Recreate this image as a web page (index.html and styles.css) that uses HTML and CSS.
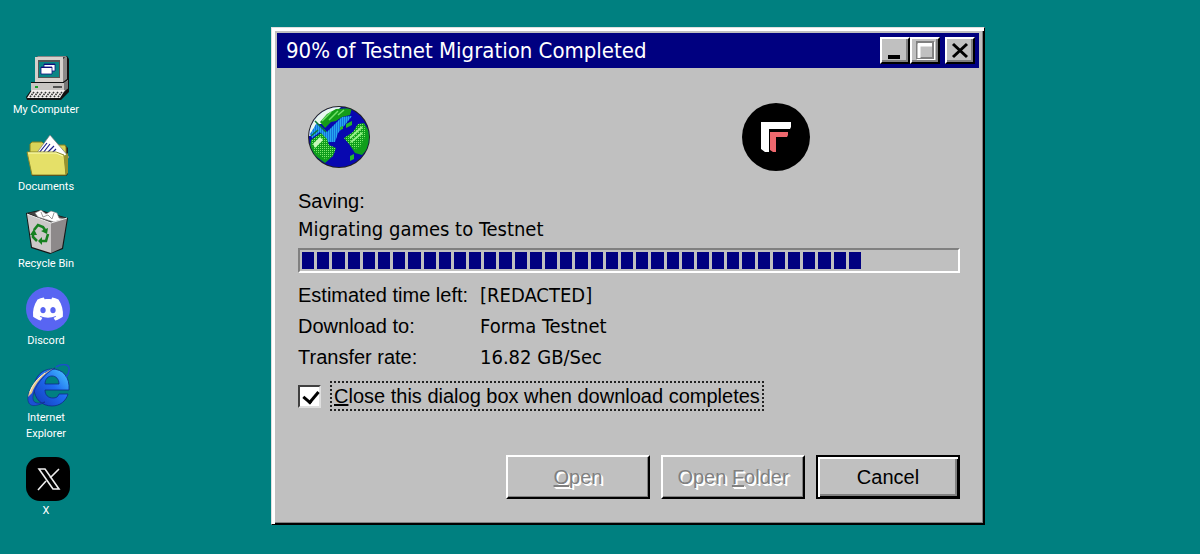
FILE: index.html
```
<!doctype html>
<html lang="en">
<head>
<meta charset="utf-8">
<title>90% of Testnet Migration Completed</title>
<link rel="stylesheet" href="styles.css">
</head>
<body>
<div class="desktop">

	<nav class="icons">
		<a href="#">
			<svg viewBox="0 0 44 44">
				<path d="M9 2L12 0H41L43 3V36L35 44H1L0 41L5 34V26H10Z" fill="#111"/>
				<path d="M9 2L12 0H41L37 3V25L41 22V1" fill="#8a8585"/>
				<path d="M9 1H37V26H9Z" fill="#d5d0cc"/>
				<path d="M37 3L41 1V23L37 26Z" fill="#8c8988"/>
				<path d="M12 4H34V22H12Z" fill="#555"/>
				<path d="M13 6H33V21H13Z" fill="#0a8585"/>
				<path d="M18 8H29V15H18Z" fill="#fff" stroke="#101080" stroke-width=".8"/>
				<path d="M15 11H26V18H15Z" fill="#fff" stroke="#101080" stroke-width=".8"/>
				<path d="M18 8.5H29M15 11.5H26" stroke="#101080"/>
				<path d="M5 27H38L42 24V32L38 35H5Z" fill="#c8c5c2"/>
				<path d="M38 27L42 24V32L38 36Z" fill="#777"/>
				<path d="M9 30H12V32H9Z" fill="#1a9c2a"/>
				<path d="M27 31H36" stroke="#222" stroke-width="1.4"/>
				<path d="M6 34H39L34 42H1Z" fill="#f0ecea"/>
				<path d="M8 36L4 41M12 36L8 41M16 36L12 41M20 36L16 41M24 36L20 41M28 36L24 41M32 36L28 41M36 36L32 41" stroke="#333" stroke-width="1.6" stroke-dasharray="1.6 .8"/>
			</svg>
			<span>My Computer</span>
		</a>
		<a href="#">
			<svg viewBox="0 0 44 44">
				<path d="M4 20V11L6 9H16L19 12H39L42 15V41L40 43H6Z" fill="#222"/>
				<path d="M4 20V11L6 9H16L19 12H39L40 14V38H6Z" fill="#d9d458" stroke="#82801f"/>
				<path d="M10 21L24 2L43 24L38 30L12 26Z" fill="#fff" stroke="#777" stroke-width=".7"/>
				<path d="M13 20L21 10M17 20L24 11M20 21L28 13M25 21L30 16" stroke="#20208c" stroke-width="1.2"/>
				<path d="M1 19H30L38 22L40 42H6Z" fill="#e5e068" stroke="#8c8929"/>
				<path d="M2 20H30L37 23" stroke="#ffffb8" fill="none"/>
				<path d="M38 23L42 20V40L40 42Z" fill="#96932f"/>
			</svg>
			<span>Documents</span>
		</a>
		<a href="#">
			<svg viewBox="0 0 44 44">
				<path d="M0 3L14 0L42 8L37 39L24 44L5 38Z" fill="#151515"/>
				<path d="M2 3L14 1L40 8L25 13Z" fill="#444"/>
				<path d="M9 3L15 0L20 4L25 1L31 3L33 8L38 9L28 12L12 7Z" fill="#fff" stroke="#888" stroke-width=".6"/>
				<path d="M15 2L17 7L22 5L26 9L28 3" fill="none" stroke="#999"/>
				<path d="M1 4L25 13V43L6 37Z" fill="#cbc8c8"/>
				<path d="M25 13L41 8L36 38L25 43Z" fill="#8d898a"/>
				<path d="M1 4L25 13L41 8" fill="none" stroke="#eee"/>
				<path d="M8 20L12 15L17 17L19 20M22 24L20 31L15 31M11 31L7 27V23" fill="none" stroke="#168020" stroke-width="2.6"/>
				<path d="M15 21L21 24L22 18ZM16 27V35L12 31ZM4 25L8 19L11 25Z" fill="#168020"/>
			</svg>
			<span>Recycle Bin</span>
		</a>
		<a href="#">
			<svg viewBox="0 0 44 44">
				<circle cx="22" cy="22" r="22" fill="#5865f2"/>
				<path transform="translate(7 7) scale(1.25)" fill="#fff" d="M20.317 4.37a19.8 19.8 0 00-4.885-1.515.074.074 0 00-.079.037c-.21.375-.444.865-.608 1.25-1.845-.276-3.68-.276-5.487 0-.164-.394-.406-.875-.618-1.25a.077.077 0 00-.078-.037A19.7 19.7 0 003.677 4.37a.07.07 0 00-.032.028C.533 9.046-.319 13.58.099 18.058a.082.082 0 00.031.056c2.053 1.508 4.041 2.423 5.993 3.03a.078.078 0 00.084-.028c.462-.63.873-1.295 1.226-1.994a.076.076 0 00-.042-.106 13.1 13.1 0 01-1.872-.892.077.077 0 01-.008-.128c.126-.094.252-.192.372-.291a.074.074 0 01.078-.011c3.928 1.793 8.18 1.793 12.061 0a.074.074 0 01.079.01c.12.099.246.198.373.292a.077.077 0 01-.007.128 12.3 12.3 0 01-1.873.891.077.077 0 00-.041.107c.36.698.772 1.363 1.225 1.993a.076.076 0 00.084.029c1.961-.607 3.95-1.522 6.003-3.03a.077.077 0 00.031-.055c.5-5.177-.838-9.674-3.549-13.66a.061.061 0 00-.031-.029zM8.02 15.331c-1.183 0-2.157-1.086-2.157-2.419s.956-2.419 2.157-2.419c1.211 0 2.176 1.095 2.157 2.419 0 1.333-.956 2.419-2.157 2.419zm7.975 0c-1.183 0-2.157-1.086-2.157-2.419s.955-2.419 2.157-2.419c1.211 0 2.176 1.095 2.157 2.419 0 1.333-.946 2.419-2.157 2.419z"/>
			</svg>
			<span>Discord</span>
		</a>
		<a href="#">
			<svg viewBox="0 0 44 44">
				<defs>
					<linearGradient id="ie" x1="0" y1="1" x2="1" y2="0">
						<stop offset="0" stop-color="#1238b8"/>
						<stop offset=".55" stop-color="#1e6cf0"/>
						<stop offset="1" stop-color="#4fd0ff"/>
					</linearGradient>
				</defs>
				<path d="M43 26H19C19 31 22 34 27 34C30 34 32 33 33 30H42C40 37 34 42 26 42C16 42 8 35 8 24C8 13 16 5 26 5C37 5 44 13 43 26ZM19 20H33C33 15 30 12 26 12C22 12 19 15 19 20Z" fill="url(#ie)" stroke="#102a88" stroke-width=".8"/>
				<path d="M30 3C37 -1 44 0 43 6C43 9 42 11 40 13" fill="none" stroke="#1a50c8" stroke-width="1.5"/>
				<path d="M29 4C16 8 3 22 2 33C1 44 10 43 19 38C12 40 6 40 7 32C8 23 18 10 29 4Z" fill="#1c50d4" stroke="#102a88" stroke-width=".6"/>
				<path d="M28 4C16 9 4 20 2 33L6 29C9 20 17 10 28 4Z" fill="#e6c88c"/>
				<path d="M19 9C12 14 6 21 4 28" fill="none" stroke="#fff5cf"/>
			</svg>
			<span>Internet<br>Explorer</span>
		</a>
		<a href="#">
			<svg viewBox="0 0 44 44">
				<rect width="44" height="44" rx="14" fill="#000"/>
				<path d="M13 12H19L33 32H27ZM33 12L24 21M12 33L20 24" fill="none" stroke="#eee" stroke-width="1.6"/>
			</svg>
			<span>X</span>
		</a>
	</nav>

	<main class="window">
		<header class="titlebar">
			<h1>90% of Testnet Migration Completed</h1>
			<button class="cap" aria-label="Minimize"><svg viewBox="0 0 30 27"><path d="M8 18H20V22H8Z" fill="#000"/></svg></button>
			<button class="cap" aria-label="Maximize" disabled><svg viewBox="0 0 30 27"><path d="M8 6H24V22H8Z" fill="none" stroke="#fff" stroke-width="2"/><path d="M7 5H23V21H7Z" fill="none" stroke="#808080" stroke-width="2"/><path d="M9 21V8H22" fill="none" stroke="#fff" stroke-width="3"/></svg></button>
			<button class="cap close" aria-label="Close"><svg viewBox="0 0 30 27"><path d="M8 7L22 20M22 7L8 20" stroke="#000" stroke-width="3"/></svg></button>
		</header>

		<div class="content">
			<div class="pictures">
				<svg class="globe" viewBox="0 0 62 62">
					<defs>
						<clipPath id="ball"><circle cx="31" cy="31" r="30"/></clipPath>
						<pattern id="dots" width="2" height="2" patternUnits="userSpaceOnUse"><path d="M0 0H1V1H0Z" fill="#7dea6d"/></pattern>
						<pattern id="waves" width="2" height="2" patternUnits="userSpaceOnUse"><path d="M0 0H1V2H0Z" fill="#25a8f0"/></pattern>
					</defs>
					<circle cx="31" cy="31" r="31" fill="#222"/>
					<g clip-path="url(#ball)">
						<path d="M0 0H62V62H0Z" fill="#0808b0"/>
						<path d="M0 0H34L28 6L14 18L8 18L4 30H0Z" fill="#e8f8ee"/>
						<path d="M2 28L9 17L19 26L28 17L34 11L44 10L36 20L30 27L27 36H20L12 26L4 32Z" fill="#1670dc"/>
						<path d="M2 28L9 17L19 26L28 17L34 11L44 10L36 20L30 27L27 36H20L12 26L4 32Z" fill="url(#waves)"/>
						<path d="M12 16L19 8L28 3L44 2L42 9L34 11L28 15L23 16L17 22Z" fill="#149c18"/>
						<path d="M14 15L23 6M21 14L30 5M30 9L36 4" stroke="#70e068" stroke-width="1.5"/>
						<path d="M7 15L18 26M3 30L10 24" stroke="#087838" stroke-width="1.5"/>
						<path d="M3 34L13 27L19 33L21 39L28 42L25 50L17 57L6 49L2 40Z" fill="#0f9e1c"/>
						<path d="M3 34L13 27L19 33L21 39L28 42L25 50L17 53L6 45Z" fill="url(#dots)"/>
						<path d="M5 38L12 31L15 34L7 42Z" fill="#c8f8bc"/>
						<path d="M36 32L45 26L50 18L56 17L62 27V40L54 49L47 47L41 38Z" fill="#0f9e1c"/>
						<path d="M36 32L45 26L50 18L56 17L58 29L52 41L47 43L41 38Z" fill="url(#dots)"/>
						<path d="M38 18L44 15V19L38 22ZM32 21L35 20V23L32 24ZM42 50L46 48V53L42 55Z" fill="#25b82c"/>
						<path d="M42 32L54 21M43 36L54 27" stroke="#96ef88" stroke-width="2"/>
					</g>
				</svg>
				<svg class="logo" viewBox="0 0 68 68">
					<circle cx="34" cy="34" r="34" fill="#000"/>
					<path d="M19 19H49V24L48 26H27V49H23L19 46Z" fill="#fff"/>
					<path d="M28 29H46V32L45 34H34V49H31L28 47Z" fill="#ee686e"/>
				</svg>
			</div>

			<p class="task">Saving:</p>
			<p class="task value">Migrating games to Testnet</p>

			<div class="progress" role="progressbar" aria-valuenow="90" aria-valuemin="0" aria-valuemax="100" aria-label="Migration">
				<div class="fill" style="width:85.5%">
					<i></i><i></i><i></i><i></i><i></i><i></i><i></i><i></i><i></i><i></i>
					<i></i><i></i><i></i><i></i><i></i><i></i><i></i><i></i><i></i><i></i>
					<i></i><i></i><i></i><i></i><i></i><i></i><i></i><i></i><i></i><i></i>
					<i></i><i></i><i></i><i></i><i></i><i></i><i></i>
				</div>
			</div>

			<dl class="details">
				<dt>Estimated time left:</dt><dd class="value">[REDACTED]</dd>
				<dt>Download to:</dt><dd class="value">Forma Testnet</dd>
				<dt>Transfer rate:</dt><dd class="value">16.82 GB/Sec</dd>
			</dl>

			<div class="option">
				<input type="checkbox" id="close" checked>
				<label for="close"><u>C</u>lose this dialog box when download completes</label>
			</div>

			<div class="buttons">
				<button disabled><span><u>O</u>pen</span></button>
				<button disabled><span>Open <u>F</u>older</span></button>
				<button class="default">Cancel</button>
			</div>
		</div>
	</main>

</div>
</body>
</html>
```
FILE: styles.css
```
* {margin:0; padding:0; box-sizing:border-box; }
body {min-height:100vh; background-color:#008080; font:20px/24px "Liberation Sans",Arial,sans-serif; color:#000; }
svg {display:block; }

.desktop {display:flex; align-items:flex-start; }

/* desktop icons */
.icons {display:flex; flex-direction:column; gap:15px; width:92px; padding-top:56px; }
.icons a {display:flex; flex-direction:column; align-items:center; gap:2px; color:#fff; font:11px/16px Roboto,"Liberation Sans",sans-serif; text-align:center; text-decoration:none; }
.icons svg {width:44px; height:44px; margin-left:4px; }

/* window */
.window {flex:1; min-width:0; margin:27px 215px 28px 179px; padding:5px; background-color:#c0c0c0; border:1px solid; border-color:#dfdfdf #000 #000 #dfdfdf; box-shadow:inset 3px 3px #fff, inset -1px -1px #000, inset -2px -2px #808080; }
.titlebar {display:flex; align-items:center; height:35px; padding:0 4px 0 9px; background-color:#000080; }
.titlebar h1 {flex:1; color:#fff; font:22px/24px "DejaVu Sans Condensed","DejaVu Sans",sans-serif; }
.cap {width:30px; height:27px; background-color:#c0c0c0; border:2px solid; border-color:#fff #000 #000 #fff; box-shadow:inset -2px -2px #808080; }
.cap svg {width:30px; height:27px; margin:-2px; }
.close {margin-left:5px; }

.content {padding:35px 19px 20px 21px; }
.pictures {display:flex; justify-content:space-between; align-items:center; margin-bottom:16px; padding:0 150px 0 10px; }
.globe {width:62px; height:62px; }
.logo {width:68px; height:68px; }
.task {line-height:28px; }
.value {font-family:"DejaVu Sans Condensed","DejaVu Sans",sans-serif; }

.progress {height:25px; margin:5px 0 7px; padding:2px; border:2px solid; border-color:#808080 #fff #fff #808080; }
.fill {display:flex; gap:3px; height:17px; }
.fill i {flex:1; background-color:#000080; }

.details {display:grid; grid-template-columns:182px 1fr; line-height:31px; }

.option {display:flex; align-items:center; gap:9px; margin-top:8px; }
.option input {appearance:none; width:23px; height:23px; background-color:#fff; border:2px solid; border-color:#404040 #dfdfdf #dfdfdf #404040; }
.option input:checked::before {content:""; display:block; width:7px; height:12px; margin:1px 0 0 6px; border:solid #000; border-width:0 3px 3px 0; transform:rotate(40deg); }
.option label {padding:1px 2px; border:2px dotted #222; }

.buttons {display:flex; justify-content:flex-end; gap:11px; margin-top:44px; }
.buttons button {width:144px; height:44px; font:20px/24px "Liberation Sans",Arial,sans-serif; background-color:#c0c0c0; border:2px solid; border-color:#fff #000 #000 #fff; box-shadow:inset -1px -1px #808080; }
.buttons button:disabled {color:#808080; text-shadow:1px 1px #fff, 2px 2px #fff; }
.buttons .default {color:#000; border-color:#000; box-shadow:inset 2px 2px #fff, inset -1px -1px #000, inset -3px -3px #808080; }
```
